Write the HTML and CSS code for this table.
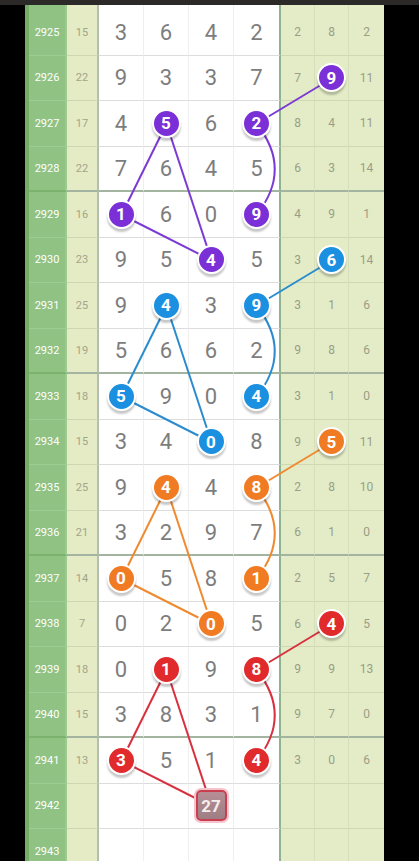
FILE: index.html
```html
<!DOCTYPE html>
<html lang="en">
<head>
    <meta charset="UTF-8">
    <meta name="viewport" content="width=device-width, initial-scale=1.0">
    <title>Trend Chart</title>
    <link rel="stylesheet" href="styles.css">
</head>
<body>
    <div class="topbar"></div>
    <div class="board">
        <!-- trend lines, one pattern repeated for each 4-row group -->
        <svg class="lines" width="355" height="856" viewBox="4 5 355 856">
            <defs>
                <g id="trend" fill="none" stroke-width="2">
                    <line x1="307" y1="78.25" x2="231.5" y2="123.75"/>
                    <line x1="141.5" y1="123.75" x2="96.5" y2="214.75"/>
                    <line x1="141.5" y1="123.75" x2="186.5" y2="260.25"/>
                    <line x1="96.5" y1="214.75" x2="186.5" y2="260.25"/>
                    <path d="M231.5 123.75 Q268 169.25 231.5 214.75"/>
                </g>
            </defs>
            <use href="#trend" stroke="#7b3ad4"/>
            <use href="#trend" stroke="#2a8ccf" transform="translate(0 182)"/>
            <use href="#trend" stroke="#f08a30" transform="translate(0 364)"/>
            <use href="#trend" stroke="#d8303f" transform="translate(0 546)"/>
        </svg>

        <div class="row"><div class="c date">2925</div><div class="c sum">15</div><div class="c n">3</div><div class="c n">6</div><div class="c n">4</div><div class="c n">2</div><div class="c r">2</div><div class="c r">8</div><div class="c r">2</div></div>
        <div class="row"><div class="c date">2926</div><div class="c sum">22</div><div class="c n">9</div><div class="c n">3</div><div class="c n">3</div><div class="c n">7</div><div class="c r">7</div><div class="c r"><span class="ball purple">9</span></div><div class="c r">11</div></div>
        <div class="row"><div class="c date">2927</div><div class="c sum">17</div><div class="c n">4</div><div class="c n"><span class="ball purple">5</span></div><div class="c n">6</div><div class="c n"><span class="ball purple">2</span></div><div class="c r">8</div><div class="c r">4</div><div class="c r">11</div></div>
        <div class="row sep"><div class="c date">2928</div><div class="c sum">22</div><div class="c n">7</div><div class="c n">6</div><div class="c n">4</div><div class="c n">5</div><div class="c r">6</div><div class="c r">3</div><div class="c r">14</div></div>
        <div class="row"><div class="c date">2929</div><div class="c sum">16</div><div class="c n"><span class="ball purple">1</span></div><div class="c n">6</div><div class="c n">0</div><div class="c n"><span class="ball purple">9</span></div><div class="c r">4</div><div class="c r">9</div><div class="c r">1</div></div>
        <div class="row"><div class="c date">2930</div><div class="c sum">23</div><div class="c n">9</div><div class="c n">5</div><div class="c n"><span class="ball purple">4</span></div><div class="c n">5</div><div class="c r">3</div><div class="c r"><span class="ball blue">6</span></div><div class="c r">14</div></div>
        <div class="row"><div class="c date">2931</div><div class="c sum">25</div><div class="c n">9</div><div class="c n"><span class="ball blue">4</span></div><div class="c n">3</div><div class="c n"><span class="ball blue">9</span></div><div class="c r">3</div><div class="c r">1</div><div class="c r">6</div></div>
        <div class="row sep"><div class="c date">2932</div><div class="c sum">19</div><div class="c n">5</div><div class="c n">6</div><div class="c n">6</div><div class="c n">2</div><div class="c r">9</div><div class="c r">8</div><div class="c r">6</div></div>
        <div class="row"><div class="c date">2933</div><div class="c sum">18</div><div class="c n"><span class="ball blue">5</span></div><div class="c n">9</div><div class="c n">0</div><div class="c n"><span class="ball blue">4</span></div><div class="c r">3</div><div class="c r">1</div><div class="c r">0</div></div>
        <div class="row"><div class="c date">2934</div><div class="c sum">15</div><div class="c n">3</div><div class="c n">4</div><div class="c n"><span class="ball blue">0</span></div><div class="c n">8</div><div class="c r">9</div><div class="c r"><span class="ball orange">5</span></div><div class="c r">11</div></div>
        <div class="row"><div class="c date">2935</div><div class="c sum">25</div><div class="c n">9</div><div class="c n"><span class="ball orange">4</span></div><div class="c n">4</div><div class="c n"><span class="ball orange">8</span></div><div class="c r">2</div><div class="c r">8</div><div class="c r">10</div></div>
        <div class="row sep"><div class="c date">2936</div><div class="c sum">21</div><div class="c n">3</div><div class="c n">2</div><div class="c n">9</div><div class="c n">7</div><div class="c r">6</div><div class="c r">1</div><div class="c r">0</div></div>
        <div class="row"><div class="c date">2937</div><div class="c sum">14</div><div class="c n"><span class="ball orange">0</span></div><div class="c n">5</div><div class="c n">8</div><div class="c n"><span class="ball orange">1</span></div><div class="c r">2</div><div class="c r">5</div><div class="c r">7</div></div>
        <div class="row"><div class="c date">2938</div><div class="c sum">7</div><div class="c n">0</div><div class="c n">2</div><div class="c n"><span class="ball orange">0</span></div><div class="c n">5</div><div class="c r">6</div><div class="c r"><span class="ball red">4</span></div><div class="c r">5</div></div>
        <div class="row"><div class="c date">2939</div><div class="c sum">18</div><div class="c n">0</div><div class="c n"><span class="ball red">1</span></div><div class="c n">9</div><div class="c n"><span class="ball red">8</span></div><div class="c r">9</div><div class="c r">9</div><div class="c r">13</div></div>
        <div class="row sep"><div class="c date">2940</div><div class="c sum">15</div><div class="c n">3</div><div class="c n">8</div><div class="c n">3</div><div class="c n">1</div><div class="c r">9</div><div class="c r">7</div><div class="c r">0</div></div>
        <div class="row"><div class="c date">2941</div><div class="c sum">13</div><div class="c n"><span class="ball red">3</span></div><div class="c n">5</div><div class="c n">1</div><div class="c n"><span class="ball red">4</span></div><div class="c r">3</div><div class="c r">0</div><div class="c r">6</div></div>
        <div class="row"><div class="c date">2942</div><div class="c sum"></div><div class="c n"></div><div class="c n"></div><div class="c n"><span class="tag">27</span></div><div class="c n"></div><div class="c r"></div><div class="c r"></div><div class="c r"></div></div>
        <div class="row"><div class="c date">2943</div><div class="c sum"></div><div class="c n"></div><div class="c n"></div><div class="c n"></div><div class="c n"></div><div class="c r"></div><div class="c r"></div><div class="c r"></div></div>
    </div>
</body>
</html>
```

FILE: styles.css
```css
* {
    box-sizing: border-box;
}
html, body {
    margin: 0;
    height: 861px;
    overflow: hidden;
    background: #000;
    font-family: Roboto, "Noto Sans", sans-serif;
}
.topbar {
    height: 5px;
    background: #2c2929;
}
.board {
    position: relative;
    width: 359px;
    margin-left: 25px;
    border-left: 4px solid #74ad67;
}
.lines {
    position: absolute;
    left: 0;
    top: 0;
    z-index: 1;
}
.row {
    display: grid;
    grid-template-columns: 38px 32px 45px 45px 45px 47px 34px 34px 35px;
    height: 45.5px;
}
.row:first-of-type {
    height: 50.5px;
}
.row:first-of-type .c {
    padding-top: 5px;
}
.c {
    display: flex;
    align-items: center;
    justify-content: center;
    border-bottom: 1px solid #dcdcdc;
}
.date {
    background: #8fc283;
    color: #fff;
    font-size: 11px;
    border-right: 2px solid #9dcb8f;
    border-bottom-color: #9ecb92;
}
.sum {
    background: #e5ebc4;
    color: #a3a48a;
    font-size: 11px;
    border-right: 2px solid #b3bdb0;
    border-bottom-color: #cfd6b2;
}
.n {
    background: #fff;
    color: #7d7d7d;
    font-size: 22px;
    border-right: 1px solid #efefef;
}
.n:nth-child(6) {
    border-right: 2px solid #8fb38f;
}
.r {
    background: #e3ecc6;
    color: #9c9d86;
    font-size: 12px;
    border-right: 1px solid #d6dfbb;
    border-bottom-color: #cfd8b3;
}
.r:last-child {
    border-right: none;
}
.row.sep .c {
    border-bottom: 2px solid #a3b4a0;
}
.row.sep .date {
    border-bottom-color: #7bb36e;
}
.ball {
    position: relative;
    z-index: 2;
    width: 29px;
    height: 29px;
    border-radius: 50%;
    border: 2px solid #fff;
    box-shadow: 0 3px 2px rgba(0, 0, 0, 0.22);
    color: #fff;
    font-size: 17px;
    font-weight: 700;
    display: flex;
    align-items: center;
    justify-content: center;
}
.purple { background: #7a30d6; }
.blue { background: #1b8fe0; }
.orange { background: #f17b22; }
.red { background: #e02a2c; }
.tag {
    position: relative;
    z-index: 2;
    width: 31px;
    height: 31px;
    border-radius: 5px;
    border: 2px solid #c93f4f;
    box-shadow: 0 0 0 2px #f3c4cb;
    background: linear-gradient(#b68f95, #9e7e84);
    color: #f4eeee;
    font-size: 17px;
    font-weight: 700;
    display: flex;
    align-items: center;
    justify-content: center;
}
```
